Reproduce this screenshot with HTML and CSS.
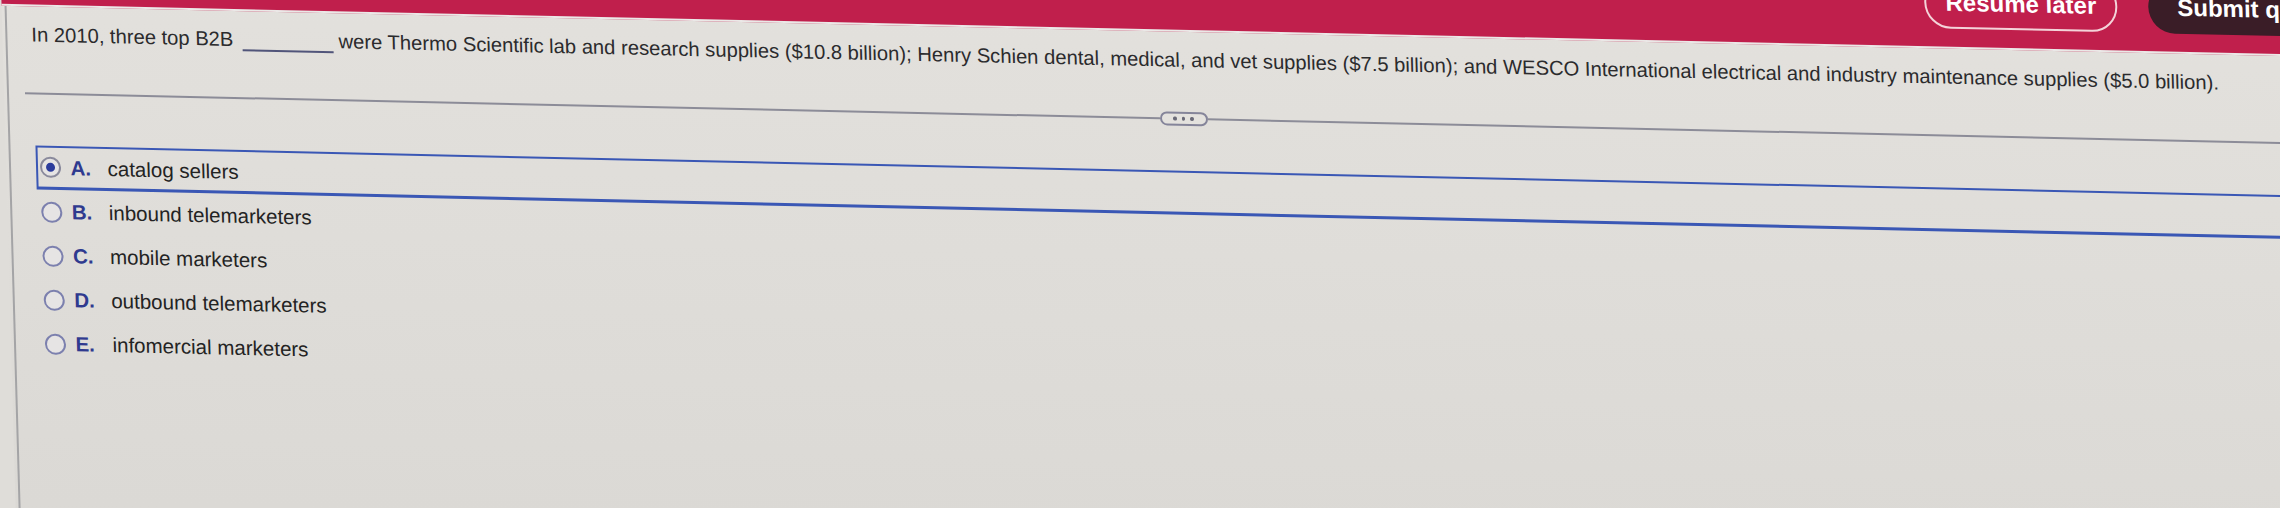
FILE: index.html
```html
<!DOCTYPE html>
<html lang="en">
<head>
    <meta charset="UTF-8">
    <meta name="viewport" content="width=device-width, initial-scale=1.0">
    <title>Quiz Question</title>
    <link rel="stylesheet" href="styles.css">
</head>
<body>
    <div class="screen">
        <header class="topbar">
            <button class="btn btn-outline">Resume later</button>
            <button class="btn btn-dark">Submit quiz</button>
        </header>

        <main class="panel">
            <p class="question">In 2010, three top B2B <span class="blank"></span> were Thermo Scientific lab and research supplies ($10.8 billion); Henry Schien dental, medical, and vet supplies ($7.5 billion); and WESCO International electrical and industry maintenance supplies ($5.0 billion).</p>

            <div class="divider">
                <span class="divider-line"></span>
                <span class="more"><i></i><i></i><i></i></span>
                <span class="divider-line"></span>
            </div>

            <ul class="choices">
                <li class="choice selected">
                    <span class="radio"></span>
                    <span class="letter">A.</span>
                    <span class="choice-text">catalog sellers</span>
                </li>
                <li class="choice">
                    <span class="radio"></span>
                    <span class="letter">B.</span>
                    <span class="choice-text">inbound telemarketers</span>
                </li>
                <li class="choice">
                    <span class="radio"></span>
                    <span class="letter">C.</span>
                    <span class="choice-text">mobile marketers</span>
                </li>
                <li class="choice">
                    <span class="radio"></span>
                    <span class="letter">D.</span>
                    <span class="choice-text">outbound telemarketers</span>
                </li>
                <li class="choice">
                    <span class="radio"></span>
                    <span class="letter">E.</span>
                    <span class="choice-text">infomercial marketers</span>
                </li>
            </ul>
        </main>
    </div>
</body>
</html>
```

FILE: styles.css
```css
* {
    margin: 0;
    padding: 0;
    box-sizing: border-box;
}

html, body {
    height: 100%;
    overflow: hidden;
    background: #dfddd9;
}

body {
    font-family: 'Liberation Sans', Arial, Helvetica, sans-serif;
    color: #2a2a2a;
}

/* the screen was photographed at a slight angle */
.screen {
    width: 2400px;
    min-height: 620px;
    background: linear-gradient(180deg, #e3e1dd 0%, #dfddd9 45%, #dad8d4 100%);
    transform-origin: 2280px 0;
    transform: skew(1.6deg, 1.26deg);
}

.topbar {
    height: 56px;
    background: #c01f4c;
    border-bottom: 2px solid #ebe8e7;
    display: flex;
    justify-content: flex-end;
    align-items: flex-end;
    gap: 31px;
    padding: 0 58px 18px 0;
}

.btn {
    height: 52px;
    border-radius: 26px;
    font-family: inherit;
    font-size: 24px;
    font-weight: 700;
    line-height: 1;
    color: #fff;
    flex-shrink: 0;
}

.btn-outline {
    background: transparent;
    border: 2px solid #f4d3d9;
    padding: 0 19px;
}

.btn-dark {
    background: #3a1d27;
    border: none;
    padding: 0 29px;
}

.panel {
    margin-left: 3px;
    border-left: 2px solid #a4a4a6;
    padding: 15px 62px 0 16px;
    min-height: 560px;
}

.question {
    margin-left: 8px;
    font-size: 20.2px;
    line-height: 26px;
    white-space: nowrap;
    color: #2b2b2d;
}

.blank {
    display: inline-block;
    width: 91px;
    margin-left: 3px;
    border-bottom: 2px solid #51557a;
    vertical-align: -5px;
}

.divider {
    display: flex;
    align-items: center;
    height: 14px;
    margin-top: 39px;
}

.divider-line {
    flex: 1;
    height: 2px;
    background: #8c8c98;
}

.more {
    width: 48px;
    height: 14px;
    border: 2px solid #85859a;
    border-radius: 7px;
    display: flex;
    justify-content: center;
    align-items: center;
    gap: 5px;
    background: #e4e2de;
}

.more i {
    width: 3.5px;
    height: 3.5px;
    border-radius: 50%;
    background: #6a6a78;
}

.choices {
    list-style: none;
    margin: 45px 0 0 9px;
}

.choice {
    height: 44px;
    display: flex;
    align-items: center;
    padding-left: 2px;
    border: 2px solid transparent;
    font-size: 20.5px;
}

.choice.selected {
    border-color: #3a57b5;
    border-bottom-width: 3px;
}

.radio {
    width: 21px;
    height: 21px;
    border-radius: 50%;
    border: 2.5px solid #7c80ae;
    background: #e6e4e4;
    display: grid;
    place-items: center;
    flex-shrink: 0;
}

.selected .radio {
    border-color: #8a8a9c;
}

.selected .radio::after {
    content: '';
    width: 9px;
    height: 9px;
    border-radius: 50%;
    background: #2c3c9c;
}

.letter {
    width: 37px;
    margin-left: 9.5px;
    font-weight: 700;
    color: #2f3a8f;
}

.choice-text {
    color: #232323;
}
```
